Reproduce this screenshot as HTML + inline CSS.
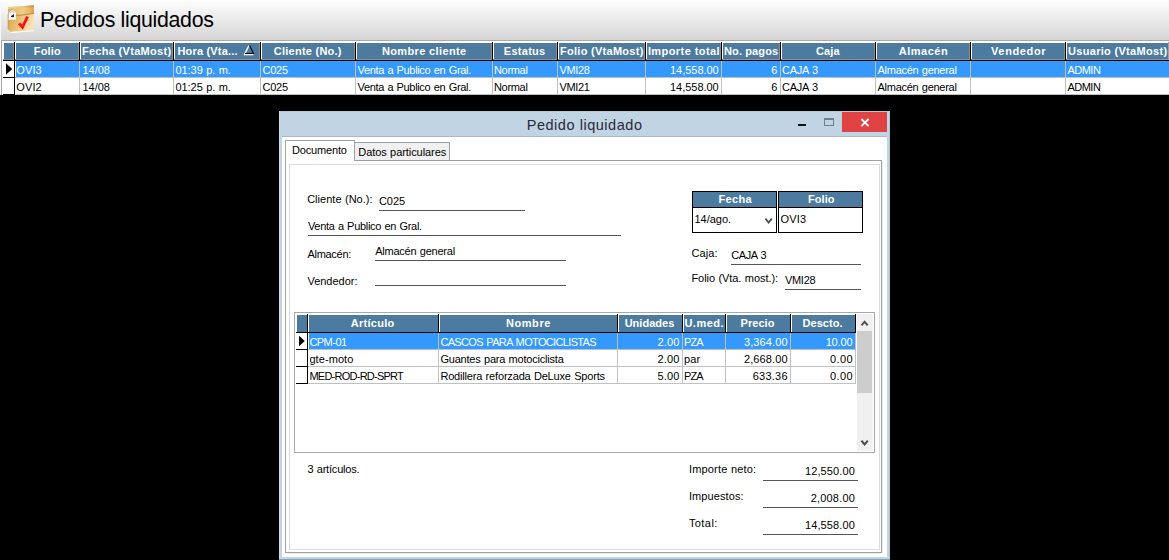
<!DOCTYPE html>
<html><head><meta charset="utf-8"><title>Pedidos liquidados</title>
<style>
html,body{margin:0;padding:0}
body{width:1169px;height:560px;background:#000;position:relative;overflow:hidden;font-family:"Liberation Sans",sans-serif}
body>div,body>span,body>svg{position:absolute;display:block}
body>span{white-space:nowrap;font-family:"Liberation Sans",sans-serif}
</style></head><body>
<div style="left:0;top:0;width:1169px;height:40px;background:linear-gradient(#fefefe 0%,#f4f4f4 25%,#d5d5d5 100%)"></div>
<div style="left:0px;top:0px;width:1px;height:95px;background:#f8f8f8;"></div>
<div style="left:0px;top:0px;width:1169px;height:1px;background:#ffffff;"></div>
<svg style="left:6px;top:3px" width="30" height="32" viewBox="6 3 30 32">
<defs>
<linearGradient id="bf" x1="0" y1="0" x2="1" y2="0.35"><stop offset="0" stop-color="#d99d44"/><stop offset="0.5" stop-color="#ebc074"/><stop offset="1" stop-color="#f6e3b6"/></linearGradient>
<linearGradient id="bl" x1="0" y1="0" x2="1" y2="0"><stop offset="0" stop-color="#e2ad58"/><stop offset="0.55" stop-color="#f0cd88"/><stop offset="0.85" stop-color="#e6b866"/><stop offset="1" stop-color="#d29c48"/></linearGradient>
<linearGradient id="bt" x1="0" y1="0" x2="1" y2="0"><stop offset="0" stop-color="#f1d596"/><stop offset="0.6" stop-color="#ecc67c"/><stop offset="1" stop-color="#c8913f"/></linearGradient>
</defs>
<path d="M8.4 29.4 L11 32.9 L34 31.2 L34 29.4 Z" fill="#ffffff" opacity="0.95"/>
<path d="M8 14 L33.8 12.4 L34 30.2 L11 31.8 L8 28.8 Z" fill="url(#bf)"/>
<path d="M8 7.3 L33.6 5.3 L34.1 13.2 Q27 14.4 19.4 15.2 L8 14.4 Z" fill="url(#bl)"/>
<path d="M8 7.3 L33.6 5.3 L33.8 7.3 L8.1 9 Z" fill="url(#bt)"/>
<path d="M8.1 14.4 L19.4 15.3 Q27 14.5 34.1 13.3" fill="none" stroke="#b98438" stroke-width="0.9"/>
<path d="M8.1 14.2 L8.1 28.8 L11 31.8" fill="none" stroke="#c89140" stroke-width="0.7"/>
<path d="M10.4 7.6 L12.4 10.4" fill="none" stroke="#b9a27a" stroke-width="0.7"/>
<path d="M8.7 13.2 L12.4 9.7 L15.9 12.6 L15.9 19.7 L8.6 19.7 Z" fill="#fbfbfb"/>
<path d="M8.7 13.2 L12.4 9.7 L15.9 12.6 L15 12.9 L12.3 12.3 L9.6 13.4 Z" fill="#d4d4d4"/>
<path d="M10.6 16.6 L13.8 13.9 L14 16.9 L12 17.3 Z" fill="#1a1a1a"/>
<path d="M19 23.4 L22.5 27.2 L27.5 16.6" fill="none" stroke="#ff1010" stroke-width="2.8" stroke-linejoin="miter"/>
</svg>
<span style="left:40.10px;top:8px;font-size:21.33px;line-height:24px;letter-spacing:-0.310px;color:#000;">Pedidos liquidados</span>
<div style="left:1px;top:40px;width:1168px;height:1px;background:#a8a8a8;"></div>
<div style="left:1px;top:40px;width:1px;height:55px;background:#a8a8a8;"></div>
<div style="left:2px;top:41px;width:1167px;height:54px;background:#ffffff;"></div>
<div style="left:4px;top:43px;width:1164px;height:16px;background:#4c7b9f;"></div>
<div style="left:3px;top:59px;width:1166px;height:1px;background:#8f8f8f;"></div>
<div style="left:3px;top:60px;width:1166px;height:1px;background:#000;"></div>
<div style="left:1168px;top:42px;width:1px;height:18px;background:#a0a0a0;"></div>
<div style="left:13px;top:43px;width:1px;height:17px;background:#8f8f8f;"></div>
<div style="left:14px;top:42px;width:1px;height:19px;background:#000;"></div>
<div style="left:15px;top:43px;width:1px;height:16px;background:#fff;"></div>
<div style="left:78px;top:43px;width:1px;height:17px;background:#8f8f8f;"></div>
<div style="left:79px;top:42px;width:1px;height:19px;background:#000;"></div>
<div style="left:80px;top:43px;width:1px;height:16px;background:#fff;"></div>
<div style="left:172px;top:43px;width:1px;height:17px;background:#8f8f8f;"></div>
<div style="left:173px;top:42px;width:1px;height:19px;background:#000;"></div>
<div style="left:174px;top:43px;width:1px;height:16px;background:#fff;"></div>
<div style="left:259px;top:43px;width:1px;height:17px;background:#8f8f8f;"></div>
<div style="left:260px;top:42px;width:1px;height:19px;background:#000;"></div>
<div style="left:261px;top:43px;width:1px;height:16px;background:#fff;"></div>
<div style="left:354px;top:43px;width:1px;height:17px;background:#8f8f8f;"></div>
<div style="left:355px;top:42px;width:1px;height:19px;background:#000;"></div>
<div style="left:356px;top:43px;width:1px;height:16px;background:#fff;"></div>
<div style="left:491px;top:43px;width:1px;height:17px;background:#8f8f8f;"></div>
<div style="left:492px;top:42px;width:1px;height:19px;background:#000;"></div>
<div style="left:493px;top:43px;width:1px;height:16px;background:#fff;"></div>
<div style="left:556px;top:43px;width:1px;height:17px;background:#8f8f8f;"></div>
<div style="left:557px;top:42px;width:1px;height:19px;background:#000;"></div>
<div style="left:558px;top:43px;width:1px;height:16px;background:#fff;"></div>
<div style="left:644px;top:43px;width:1px;height:17px;background:#8f8f8f;"></div>
<div style="left:645px;top:42px;width:1px;height:19px;background:#000;"></div>
<div style="left:646px;top:43px;width:1px;height:16px;background:#fff;"></div>
<div style="left:720px;top:43px;width:1px;height:17px;background:#8f8f8f;"></div>
<div style="left:721px;top:42px;width:1px;height:19px;background:#000;"></div>
<div style="left:722px;top:43px;width:1px;height:16px;background:#fff;"></div>
<div style="left:779px;top:43px;width:1px;height:17px;background:#8f8f8f;"></div>
<div style="left:780px;top:42px;width:1px;height:19px;background:#000;"></div>
<div style="left:781px;top:43px;width:1px;height:16px;background:#fff;"></div>
<div style="left:874px;top:43px;width:1px;height:17px;background:#8f8f8f;"></div>
<div style="left:875px;top:42px;width:1px;height:19px;background:#000;"></div>
<div style="left:876px;top:43px;width:1px;height:16px;background:#fff;"></div>
<div style="left:969px;top:43px;width:1px;height:17px;background:#8f8f8f;"></div>
<div style="left:970px;top:42px;width:1px;height:19px;background:#000;"></div>
<div style="left:971px;top:43px;width:1px;height:16px;background:#fff;"></div>
<div style="left:1064px;top:43px;width:1px;height:17px;background:#8f8f8f;"></div>
<div style="left:1065px;top:42px;width:1px;height:19px;background:#000;"></div>
<div style="left:1066px;top:43px;width:1px;height:16px;background:#fff;"></div>
<div style="left:16px;top:61px;width:1153px;height:16px;background:#3399ff;"></div>
<div style="left:15px;top:77px;width:1154px;height:1px;background:#c0c0c0;"></div>
<div style="left:15px;top:94px;width:1154px;height:1px;background:#c0c0c0;"></div>
<div style="left:79px;top:61px;width:1px;height:34px;background:#c0c0c0;"></div>
<div style="left:173px;top:61px;width:1px;height:34px;background:#c0c0c0;"></div>
<div style="left:260px;top:61px;width:1px;height:34px;background:#c0c0c0;"></div>
<div style="left:355px;top:61px;width:1px;height:34px;background:#c0c0c0;"></div>
<div style="left:492px;top:61px;width:1px;height:34px;background:#c0c0c0;"></div>
<div style="left:557px;top:61px;width:1px;height:34px;background:#c0c0c0;"></div>
<div style="left:645px;top:61px;width:1px;height:34px;background:#c0c0c0;"></div>
<div style="left:721px;top:61px;width:1px;height:34px;background:#c0c0c0;"></div>
<div style="left:780px;top:61px;width:1px;height:34px;background:#c0c0c0;"></div>
<div style="left:875px;top:61px;width:1px;height:34px;background:#c0c0c0;"></div>
<div style="left:970px;top:61px;width:1px;height:34px;background:#c0c0c0;"></div>
<div style="left:1065px;top:61px;width:1px;height:34px;background:#c0c0c0;"></div>
<div style="left:14px;top:61px;width:1px;height:34px;background:#000;"></div>
<div style="left:3px;top:77px;width:12px;height:1px;background:#000;"></div>
<div style="left:3px;top:94px;width:12px;height:1px;background:#000;"></div>
<svg style="left:5px;top:63px" width="8" height="12" viewBox="0 0 8 12"><path d="M1 0.2 L7.2 6 L1 11.8 Z" fill="#000"/></svg>
<span style="left:33.80px;top:45px;font-size:11px;line-height:12px;letter-spacing:0.157px;color:#fff;font-weight:bold;">Folio</span>
<span style="left:81.90px;top:45px;font-size:11px;line-height:12px;letter-spacing:0.310px;color:#fff;font-weight:bold;">Fecha (VtaMost)</span>
<span style="left:177.50px;top:45px;font-size:11px;line-height:12px;letter-spacing:0.176px;color:#fff;font-weight:bold;">Hora (Vta...</span>
<span style="left:273.80px;top:45px;font-size:11px;line-height:12px;letter-spacing:0.244px;color:#fff;font-weight:bold;">Cliente (No.)</span>
<span style="left:381.90px;top:45px;font-size:11px;line-height:12px;letter-spacing:0.372px;color:#fff;font-weight:bold;">Nombre cliente</span>
<span style="left:503.80px;top:45px;font-size:11px;line-height:12px;letter-spacing:0.277px;color:#fff;font-weight:bold;">Estatus</span>
<span style="left:560.00px;top:45px;font-size:11px;line-height:12px;letter-spacing:0.280px;color:#fff;font-weight:bold;">Folio (VtaMost)</span>
<span style="left:647.90px;top:45px;font-size:11px;line-height:12px;letter-spacing:0.424px;color:#fff;font-weight:bold;">Importe total</span>
<span style="left:724.00px;top:45px;font-size:11px;line-height:12px;letter-spacing:0.116px;color:#fff;font-weight:bold;">No. pagos</span>
<span style="left:815.90px;top:45px;font-size:11px;line-height:12px;letter-spacing:0.155px;color:#fff;font-weight:bold;">Caja</span>
<span style="left:898.80px;top:45px;font-size:11px;line-height:12px;letter-spacing:0.508px;color:#fff;font-weight:bold;">Almacén</span>
<span style="left:991.00px;top:45px;font-size:11px;line-height:12px;letter-spacing:0.639px;color:#fff;font-weight:bold;">Vendedor</span>
<span style="left:1068.00px;top:45px;font-size:11px;line-height:12px;letter-spacing:0.311px;color:#fff;font-weight:bold;">Usuario (VtaMost)</span>
<svg style="left:243px;top:44px" width="12" height="12" viewBox="243 44 12 12"><path d="M249 45.5 L244.5 54.5 L253.4 54.5" fill="none" stroke="#fff" stroke-width="1.4"/><path d="M249.6 45.5 L253.8 54 M245.2 53.5 L252.8 53.5" fill="none" stroke="#000" stroke-width="1.1"/></svg>
<span style="left:16.30px;top:64px;font-size:11px;line-height:12px;letter-spacing:0.111px;color:#fff;">OVI3</span>
<span style="left:82.40px;top:64px;font-size:11px;line-height:12px;letter-spacing:0.018px;color:#fff;">14/08</span>
<span style="left:175.40px;top:64px;font-size:11px;line-height:12px;letter-spacing:-0.033px;color:#fff;word-spacing:0.373px;">01:39 p. m.</span>
<span style="left:262.50px;top:64px;font-size:11px;line-height:12px;letter-spacing:-0.233px;color:#fff;">C025</span>
<span style="left:357.50px;top:64px;font-size:11px;line-height:12px;letter-spacing:-0.331px;color:#fff;word-spacing:0.671px;">Venta a Publico en Gral.</span>
<span style="left:494.00px;top:64px;font-size:11px;line-height:12px;letter-spacing:-0.320px;color:#fff;">Normal</span>
<span style="left:559.40px;top:64px;font-size:11px;line-height:12px;letter-spacing:-0.298px;color:#fff;">VMI28</span>
<span style="left:670.00px;top:64px;font-size:11px;line-height:12px;letter-spacing:-0.030px;color:#fff;">14,558.00</span>
<span style="left:771.30px;top:64px;font-size:11px;line-height:12px;letter-spacing:0.682px;color:#fff;">6</span>
<span style="left:781.90px;top:64px;font-size:11px;line-height:12px;letter-spacing:-0.206px;color:#fff;word-spacing:0.546px;">CAJA 3</span>
<span style="left:877.50px;top:64px;font-size:11px;line-height:12px;letter-spacing:-0.272px;color:#fff;word-spacing:0.612px;">Almacén general</span>
<span style="left:1067.50px;top:64px;font-size:11px;line-height:12px;letter-spacing:-0.524px;color:#fff;">ADMIN</span>
<span style="left:16.30px;top:81px;font-size:11px;line-height:12px;letter-spacing:0.111px;color:#000;">OVI2</span>
<span style="left:82.40px;top:81px;font-size:11px;line-height:12px;letter-spacing:0.018px;color:#000;">14/08</span>
<span style="left:175.40px;top:81px;font-size:11px;line-height:12px;letter-spacing:-0.033px;color:#000;word-spacing:0.373px;">01:25 p. m.</span>
<span style="left:262.50px;top:81px;font-size:11px;line-height:12px;letter-spacing:-0.233px;color:#000;">C025</span>
<span style="left:357.50px;top:81px;font-size:11px;line-height:12px;letter-spacing:-0.331px;color:#000;word-spacing:0.671px;">Venta a Publico en Gral.</span>
<span style="left:494.00px;top:81px;font-size:11px;line-height:12px;letter-spacing:-0.320px;color:#000;">Normal</span>
<span style="left:559.40px;top:81px;font-size:11px;line-height:12px;letter-spacing:-0.298px;color:#000;">VMI21</span>
<span style="left:670.00px;top:81px;font-size:11px;line-height:12px;letter-spacing:-0.030px;color:#000;">14,558.00</span>
<span style="left:771.30px;top:81px;font-size:11px;line-height:12px;letter-spacing:0.682px;color:#000;">6</span>
<span style="left:781.90px;top:81px;font-size:11px;line-height:12px;letter-spacing:-0.206px;color:#000;word-spacing:0.546px;">CAJA 3</span>
<span style="left:877.50px;top:81px;font-size:11px;line-height:12px;letter-spacing:-0.272px;color:#000;word-spacing:0.612px;">Almacén general</span>
<span style="left:1067.50px;top:81px;font-size:11px;line-height:12px;letter-spacing:-0.524px;color:#000;">ADMIN</span>
<div style="left:279px;top:111px;width:611px;height:449px;background:#c1d4e3;"></div>
<div style="left:279px;top:111px;width:611px;height:1px;background:#b4c6d8;"></div>
<div style="left:279px;top:111px;width:1px;height:449px;background:#cfdcea;"></div>
<div style="left:889px;top:111px;width:1px;height:449px;background:#b4c6d8;"></div>
<div style="left:279px;top:559px;width:611px;height:1px;background:#8f9fb2;"></div>
<div style="left:282px;top:136px;width:605px;height:1px;background:#a7b8c9;"></div>
<div style="left:282px;top:137px;width:605px;height:420px;background:#fff;"></div>
<span style="left:526.70px;top:117px;font-size:14.5px;line-height:16px;letter-spacing:0.538px;color:#2a2a38;">Pedido liquidado</span>
<div style="left:842px;top:112px;width:45px;height:20px;background:#e04343;"></div>
<svg style="left:859px;top:117px" width="12" height="11" viewBox="0 0 12 11"><path d="M2.4 2 L9.6 9.1 M9.6 2 L2.4 9.1" stroke="#fff" stroke-width="1.8" fill="none"/></svg>
<div style="left:798px;top:124px;width:8px;height:2px;background:#111;"></div>
<div style="left:824px;top:118px;width:8px;height:5px;border:1px solid #6e7f90;border-top-width:2px;background:#c1d4e3"></div>
<div style="left:882px;top:162px;width:1px;height:392px;background:#eeeeee;"></div>
<div style="left:287px;top:553px;width:596px;height:1px;background:#eeeeee;"></div>
<div style="left:285px;top:160px;width:597px;height:393px;background:#fff;box-sizing:border-box;border:1px solid #a0a0a0"></div>
<div style="left:289px;top:164px;width:591px;height:386px;background:#fff;box-sizing:border-box;border:1px solid #dcdcdc"></div>
<div style="left:354px;top:142px;width:96px;height:19px;background:#f0f0f0;box-sizing:border-box;border:1px solid #a0a0a0;border-bottom:none"></div>
<div style="left:354px;top:160px;width:96px;height:1px;background:#a0a0a0;"></div>
<div style="left:285px;top:140px;width:70px;height:21px;background:#fff;box-sizing:border-box;border:1px solid #a0a0a0;border-bottom:none"></div>
<span style="left:292.00px;top:144px;font-size:11px;line-height:12px;letter-spacing:-0.169px;color:#000;">Documento</span>
<span style="left:358.30px;top:146px;font-size:11px;line-height:12px;letter-spacing:-0.068px;color:#000;word-spacing:0.408px;">Datos particulares</span>
<span style="left:307.15px;top:193px;font-size:11px;line-height:12px;letter-spacing:0.026px;color:#000;word-spacing:0.314px;">Cliente (No.):</span>
<span style="left:378.90px;top:195px;font-size:11px;line-height:12px;letter-spacing:-0.033px;color:#000;">C025</span>
<div style="left:379px;top:210px;width:146px;height:1px;background:#555;"></div>
<span style="left:307.90px;top:220px;font-size:11px;line-height:12px;letter-spacing:-0.305px;color:#000;word-spacing:0.645px;">Venta a Publico en Gral.</span>
<div style="left:308px;top:235px;width:313px;height:1px;background:#555;"></div>
<span style="left:307.40px;top:248px;font-size:11px;line-height:12px;letter-spacing:-0.272px;color:#000;">Almacén:</span>
<span style="left:375.15px;top:245px;font-size:11px;line-height:12px;letter-spacing:-0.226px;color:#000;word-spacing:0.566px;">Almacén general</span>
<div style="left:375px;top:260px;width:191px;height:1px;background:#555;"></div>
<span style="left:307.40px;top:275px;font-size:11px;line-height:12px;letter-spacing:0.005px;color:#000;">Vendedor:</span>
<div style="left:375px;top:285px;width:191px;height:1px;background:#555;"></div>
<div style="left:692px;top:191px;width:85px;height:42px;background:#fff;box-sizing:border-box;border:1px solid #000"></div>
<div style="left:693px;top:192px;width:83px;height:15px;background:#4c7b9f;"></div>
<div style="left:693px;top:207px;width:83px;height:1px;background:#000;"></div>
<div style="left:778px;top:191px;width:85px;height:42px;background:#fff;box-sizing:border-box;border:1px solid #000"></div>
<div style="left:779px;top:192px;width:83px;height:15px;background:#4c7b9f;"></div>
<div style="left:779px;top:207px;width:83px;height:1px;background:#000;"></div>
<span style="left:718.40px;top:193px;font-size:11px;line-height:12px;letter-spacing:0.352px;color:#fff;font-weight:bold;">Fecha</span>
<span style="left:807.90px;top:193px;font-size:11px;line-height:12px;letter-spacing:0.107px;color:#fff;font-weight:bold;">Folio</span>
<span style="left:694.40px;top:213px;font-size:11px;line-height:12px;letter-spacing:-0.000px;color:#000;">14/ago.</span>
<span style="left:780.40px;top:213px;font-size:11px;line-height:12px;letter-spacing:0.211px;color:#000;">OVI3</span>
<svg style="left:763px;top:216px" width="12" height="10" viewBox="763 216 12 10"><path d="M765.4 218.7 L768.6 222.5 L771.8 218.7" stroke="#505050" stroke-width="1.9" fill="none"/></svg>
<span style="left:691.40px;top:247px;font-size:11px;line-height:12px;letter-spacing:0.130px;color:#000;">Caja:</span>
<span style="left:731.15px;top:249px;font-size:11px;line-height:12px;letter-spacing:-0.394px;color:#000;word-spacing:0.734px;">CAJA 3</span>
<div style="left:731px;top:264px;width:130px;height:1px;background:#555;"></div>
<span style="left:691.40px;top:272px;font-size:11px;line-height:12px;letter-spacing:-0.049px;color:#000;word-spacing:0.389px;">Folio (Vta. most.):</span>
<span style="left:784.90px;top:274px;font-size:11px;line-height:12px;letter-spacing:-0.273px;color:#000;">VMI28</span>
<div style="left:785px;top:289px;width:76px;height:1px;background:#555;"></div>
<div style="left:294px;top:312px;width:581px;height:141px;background:#fff;box-sizing:border-box;border:1px solid #a6a8b0"></div>
<div style="left:857px;top:314px;width:15px;height:137px;background:#f0f0f0;"></div>
<div style="left:872px;top:314px;width:1px;height:137px;background:#f8f8f8;"></div>
<div style="left:857px;top:331px;width:15px;height:62px;background:#cdcdcd;"></div>
<svg style="left:859px;top:318px" width="12" height="10" viewBox="859 318 12 10"><path d="M861.5 325.4 L864.6 321.8 L867.7 325.4" stroke="#505050" stroke-width="2" fill="none"/></svg>
<svg style="left:859px;top:438px" width="12" height="10" viewBox="859 438 12 10"><path d="M861.4 440.6 L864.6 444.4 L867.8 440.6" stroke="#484848" stroke-width="2" fill="none"/></svg>
<div style="left:297px;top:315px;width:558px;height:17px;background:#4c7b9f;"></div>
<div style="left:296px;top:332px;width:560px;height:1px;background:#000;"></div>
<div style="left:307px;top:314px;width:1px;height:19px;background:#000;"></div>
<div style="left:308px;top:315px;width:1px;height:17px;background:#fff;"></div>
<div style="left:438px;top:314px;width:1px;height:19px;background:#000;"></div>
<div style="left:439px;top:315px;width:1px;height:17px;background:#fff;"></div>
<div style="left:617px;top:314px;width:1px;height:19px;background:#000;"></div>
<div style="left:618px;top:315px;width:1px;height:17px;background:#fff;"></div>
<div style="left:682px;top:314px;width:1px;height:19px;background:#000;"></div>
<div style="left:683px;top:315px;width:1px;height:17px;background:#fff;"></div>
<div style="left:725px;top:314px;width:1px;height:19px;background:#000;"></div>
<div style="left:726px;top:315px;width:1px;height:17px;background:#fff;"></div>
<div style="left:790px;top:314px;width:1px;height:19px;background:#000;"></div>
<div style="left:791px;top:315px;width:1px;height:17px;background:#fff;"></div>
<div style="left:855px;top:314px;width:1px;height:19px;background:#000;"></div>
<div style="left:309px;top:333px;width:546px;height:16px;background:#3399ff;"></div>
<div style="left:308px;top:349px;width:548px;height:1px;background:#c0c0c0;"></div>
<div style="left:296px;top:349px;width:12px;height:1px;background:#000;"></div>
<div style="left:308px;top:366px;width:548px;height:1px;background:#c0c0c0;"></div>
<div style="left:296px;top:366px;width:12px;height:1px;background:#000;"></div>
<div style="left:308px;top:383px;width:548px;height:1px;background:#c0c0c0;"></div>
<div style="left:296px;top:383px;width:12px;height:1px;background:#000;"></div>
<div style="left:438px;top:333px;width:1px;height:51px;background:#c0c0c0;"></div>
<div style="left:617px;top:333px;width:1px;height:51px;background:#c0c0c0;"></div>
<div style="left:682px;top:333px;width:1px;height:51px;background:#c0c0c0;"></div>
<div style="left:725px;top:333px;width:1px;height:51px;background:#c0c0c0;"></div>
<div style="left:790px;top:333px;width:1px;height:51px;background:#c0c0c0;"></div>
<div style="left:855px;top:333px;width:1px;height:51px;background:#c0c0c0;"></div>
<div style="left:307px;top:333px;width:1px;height:51px;background:#000;"></div>
<svg style="left:298px;top:335px" width="8" height="12" viewBox="0 0 8 12"><path d="M1 0.8 L6.8 6 L1 11.2 Z" fill="#000"/></svg>
<span style="left:350.80px;top:317px;font-size:11px;line-height:12px;letter-spacing:0.263px;color:#fff;font-weight:bold;">Artículo</span>
<span style="left:505.90px;top:317px;font-size:11px;line-height:12px;letter-spacing:0.588px;color:#fff;font-weight:bold;">Nombre</span>
<span style="left:624.64px;top:317px;font-size:11px;line-height:12px;letter-spacing:0.029px;color:#fff;font-weight:bold;">Unidades</span>
<span style="left:684.40px;top:317px;font-size:11px;line-height:12px;letter-spacing:0.505px;color:#fff;font-weight:bold;">U.med.</span>
<span style="left:740.59px;top:317px;font-size:11px;line-height:12px;letter-spacing:0.040px;color:#fff;font-weight:bold;">Precio</span>
<span style="left:802.53px;top:317px;font-size:11px;line-height:12px;letter-spacing:0.033px;color:#fff;font-weight:bold;">Descto.</span>
<span style="left:309.40px;top:336px;font-size:11px;line-height:12px;letter-spacing:-0.529px;color:#fff;">CPM-01</span>
<span style="left:440.40px;top:336px;font-size:11px;line-height:12px;letter-spacing:-0.655px;color:#fff;word-spacing:0.995px;">CASCOS PARA MOTOCICLISTAS</span>
<span style="left:657.40px;top:336px;font-size:11px;line-height:12px;letter-spacing:0.180px;color:#fff;">2.00</span>
<span style="left:683.90px;top:336px;font-size:11px;line-height:12px;letter-spacing:-0.847px;color:#fff;">PZA</span>
<span style="left:743.90px;top:336px;font-size:11px;line-height:12px;letter-spacing:0.126px;color:#fff;">3,364.00</span>
<span style="left:825.65px;top:336px;font-size:11px;line-height:12px;letter-spacing:-0.144px;color:#fff;">10.00</span>
<span style="left:309.40px;top:353px;font-size:11px;line-height:12px;letter-spacing:0.077px;color:#000;">gte-moto</span>
<span style="left:440.40px;top:353px;font-size:11px;line-height:12px;letter-spacing:-0.200px;color:#000;word-spacing:0.540px;">Guantes para motociclista</span>
<span style="left:657.40px;top:353px;font-size:11px;line-height:12px;letter-spacing:0.180px;color:#000;">2.00</span>
<span style="left:683.90px;top:353px;font-size:11px;line-height:12px;letter-spacing:0.150px;color:#000;">par</span>
<span style="left:743.90px;top:353px;font-size:11px;line-height:12px;letter-spacing:0.126px;color:#000;">2,668.00</span>
<span style="left:829.90px;top:353px;font-size:11px;line-height:12px;letter-spacing:0.430px;color:#000;">0.00</span>
<span style="left:309.40px;top:370px;font-size:11px;line-height:12px;letter-spacing:-0.747px;color:#000;">MED-ROD-RD-SPRT</span>
<span style="left:440.40px;top:370px;font-size:11px;line-height:12px;letter-spacing:-0.175px;color:#000;word-spacing:0.515px;">Rodillera reforzada DeLuxe Sports</span>
<span style="left:657.40px;top:370px;font-size:11px;line-height:12px;letter-spacing:0.180px;color:#000;">5.00</span>
<span style="left:683.90px;top:370px;font-size:11px;line-height:12px;letter-spacing:-0.847px;color:#000;">PZA</span>
<span style="left:752.65px;top:370px;font-size:11px;line-height:12px;letter-spacing:0.261px;color:#000;">633.36</span>
<span style="left:829.90px;top:370px;font-size:11px;line-height:12px;letter-spacing:0.430px;color:#000;">0.00</span>
<span style="left:307.40px;top:463px;font-size:11px;line-height:12px;letter-spacing:-0.194px;color:#000;word-spacing:0.534px;">3 artículos.</span>
<span style="left:688.90px;top:463px;font-size:11px;line-height:12px;letter-spacing:0.186px;color:#000;word-spacing:0.154px;">Importe neto:</span>
<span style="left:804.90px;top:465px;font-size:11px;line-height:12px;letter-spacing:0.127px;color:#000;">12,550.00</span>
<div style="left:763px;top:480px;width:95px;height:1px;background:#555;"></div>
<span style="left:688.90px;top:490px;font-size:11px;line-height:12px;letter-spacing:0.100px;color:#000;">Impuestos:</span>
<span style="left:810.65px;top:492px;font-size:11px;line-height:12px;letter-spacing:0.197px;color:#000;">2,008.00</span>
<div style="left:763px;top:507px;width:95px;height:1px;background:#555;"></div>
<span style="left:688.90px;top:517px;font-size:11px;line-height:12px;letter-spacing:0.432px;color:#000;">Total:</span>
<span style="left:804.90px;top:519px;font-size:11px;line-height:12px;letter-spacing:0.127px;color:#000;">14,558.00</span>
<div style="left:763px;top:534px;width:95px;height:1px;background:#555;"></div>
</body></html>
